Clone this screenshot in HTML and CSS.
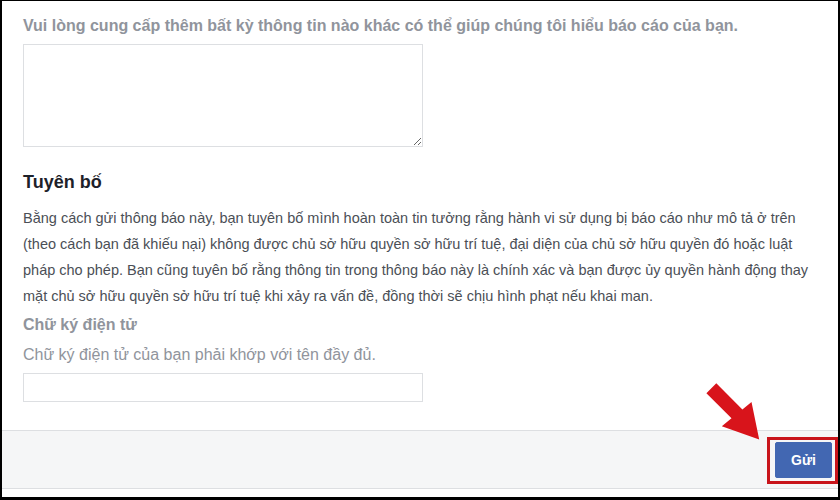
FILE: index.html
```html
<!DOCTYPE html>
<html lang="vi">

<head>
    <meta charset="UTF-8">
    <meta name="viewport" content="width=device-width, initial-scale=1.0">
    <title>Báo cáo</title>
    <link rel="stylesheet" href="styles.css">
</head>

<body>

    <div class="frame">
        <div class="report-body">
            <label class="field-label" for="more-info">Vui lòng cung cấp thêm bất kỳ thông tin nào khác có thể giúp chúng tôi hiểu báo cáo của bạn.</label>
            <textarea id="more-info" class="more-info"></textarea>

            <h2 class="section-title">Tuyên bố</h2>
            <p class="statement">Bằng cách gửi thông báo này, bạn tuyên bố mình hoàn toàn tin tưởng rằng hành vi sử dụng bị báo cáo như mô tả ở trên (theo cách bạn đã khiếu nại) không được chủ sở hữu quyền sở hữu trí tuệ, đại diện của chủ sở hữu quyền đó hoặc luật pháp cho phép. Bạn cũng tuyên bố rằng thông tin trong thông báo này là chính xác và bạn được ủy quyền hành động thay mặt chủ sở hữu quyền sở hữu trí tuệ khi xảy ra vấn đề, đồng thời sẽ chịu hình phạt nếu khai man.</p>

            <label class="field-label sig-label" for="signature">Chữ ký điện tử</label>
            <p class="hint">Chữ ký điện tử của bạn phải khớp với tên đầy đủ.</p>
            <input type="text" id="signature" class="signature">
        </div>

        <div class="report-footer">
            <div class="highlight">
                <button type="submit" class="send-btn">Gửi</button>
            </div>
        </div>

        <!-- red arrow pointing at the button -->
        <svg class="pointer" width="62" height="62" viewBox="0 0 62 62">
            <polygon points="4.4,13.2 14.3,3.3 40.4,29.4 49.5,22 57.2,59.4 19.8,46.2 29.5,38.3" fill="#d8141b"/>
        </svg>
    </div>

</body>

</html>
```

FILE: styles.css
```css
body {
    margin: 0;
    padding: 0;
    background-color: #fff;
    font-family: 'Liberation Sans', Arial, sans-serif;
}

.frame {
    position: relative;
    width: 840px;
    height: 500px;
    box-sizing: border-box;
    border-top: 1px solid #000;
    border-left: 2px solid #000;
    border-right: 2px solid #000;
    border-bottom: 3px solid #000;
    overflow: hidden;
}

.report-body {
    padding: 15px 0 0 21px;
    height: 429px;
    box-sizing: border-box;
}

.field-label {
    display: block;
    color: #90949c;
    font-size: 16px;
    line-height: 20px;
    font-weight: bold;
    margin: 0;
}

.more-info {
    display: block;
    width: 400px;
    height: 103px;
    box-sizing: border-box;
    margin-top: 8px;
    border: 1px solid #dddfe2;
    border-radius: 0;
    resize: vertical;
}

.section-title {
    margin: 24px 0 0 0;
    color: #1d2129;
    font-size: 18px;
    line-height: 22px;
    font-weight: bold;
}

.statement {
    margin: 12px 0 0 0;
    color: #4b4f56;
    font-size: 14.5px;
    line-height: 26px;
    width: 800px;
}

.sig-label {
    margin-top: 6px;
}

.hint {
    margin: 10px 0 0 0;
    color: #90949c;
    font-size: 16px;
    line-height: 20px;
}

.signature {
    display: block;
    width: 400px;
    height: 29px;
    box-sizing: border-box;
    margin-top: 8px;
    border: 1px solid #dddfe2;
    border-radius: 0;
}

.report-footer {
    height: 59px;
    box-sizing: border-box;
    background-color: #f5f6f7;
    border-top: 1px solid #dddfe2;
    border-bottom: 1px solid #dddfe2;
    display: flex;
    justify-content: flex-end;
    align-items: center;
}

.highlight {
    border: 3px solid #c8141b;
    padding: 2px 3px 3px 5px;
    margin-top: 2px;
}

.send-btn {
    display: block;
    background-color: #4267b2;
    border: 1px solid #4267b2;
    border-radius: 2px;
    color: #fff;
    font-family: 'Liberation Sans', Arial, sans-serif;
    font-size: 14px;
    font-weight: bold;
    width: 57px;
    height: 36px;
    cursor: pointer;
}

.pointer {
    position: absolute;
    left: 700px;
    top: 379px;
}
```
